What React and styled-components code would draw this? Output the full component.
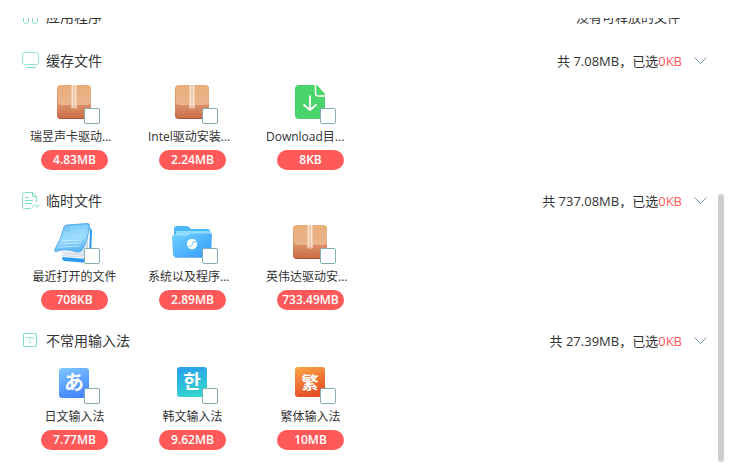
import styled, { createGlobalStyle } from "styled-components";

const GlobalStyle = createGlobalStyle`
  * {
    box-sizing: border-box;
  }

  body {
    margin: 0;
    background-color: white;
    color: #333;
    font-family: "Open Sans", "Noto Sans CJK SC", sans-serif;
  }
`;

const Page = styled.div`
  display: flex;
  height: 100vh;
  padding-top: 18px;
  overflow: hidden;
`;

const List = styled.main`
  flex: 1;
  min-width: 0;
  overflow: hidden;
`;

const Rail = styled.div`
  width: 22px;
  padding: 176px 0 2px;
  display: flex;
`;

const Thumb = styled.div`
  width: 6px;
  border-radius: 3px;
  background-color: #cdcdcd;
`;

const Section = styled.section`
  padding-bottom: ${(props) => (props.$empty ? "0" : "9px")};
  margin-top: ${(props) => (props.$empty ? "-23px" : "0")};
`;

const Header = styled.header`
  height: 44px;
  padding: 0 11px 0 22px;
  display: flex;
  align-items: center;
`;

const Title = styled.h2`
  flex: 1;
  margin: 0 0 0 6px;
  font-size: 14px;
  font-weight: 400;
  line-height: 20px;
`;

const Summary = styled.span`
  font-size: 13px;
  line-height: 20px;
  margin-right: ${(props) => (props.$empty ? "27px" : "12px")};
`;

const Selected = styled.span`
  color: #ff5c5c;
`;

const Toggle = styled.button`
  display: flex;
  padding: 0;
  border: none;
  background: none;
  cursor: pointer;
`;

const Items = styled.div`
  display: flex;
  flex-wrap: wrap;
  gap: 29px;
  padding-left: 30px;
`;

const Item = styled.label`
  width: 89px;
  display: flex;
  flex-direction: column;
  align-items: center;
`;

const Picture = styled.span`
  position: relative;
  width: 41px;
  height: 42px;
`;

const Check = styled.input`
  appearance: none;
  position: absolute;
  right: -5px;
  bottom: 1px;
  width: 16px;
  height: 16px;
  margin: 0;
  border: 1px solid #86adb3;
  border-radius: 2px;
  background-color: white;

  &:checked {
    background-color: #ff5c5c;
  }
`;

const Name = styled.span`
  width: 100%;
  margin-bottom: 2px;
  font-size: 12px;
  line-height: 23px;
  white-space: nowrap;
  text-align: ${(props) => (props.$cut ? "left" : "center")};
`;

const Size = styled.span`
  min-width: 67px;
  height: 20px;
  padding: 0 5px;
  border-radius: 10px;
  background-color: #ff5959;
  color: white;
  font-size: 12px;
  font-weight: 600;
  line-height: 20px;
  text-align: center;
`;

const Art = ({ children }) => (
  <svg width="41" height="42" viewBox="0 0 41 42" aria-hidden="true">
    {children}
  </svg>
);

const BoxArt = ({ id }) => (
  <Art>
    <defs>
      <linearGradient id={id + "body"} x1="0" y1="0" x2="0" y2="1">
        <stop offset="0" stopColor="#e9a876" />
        <stop offset="0.6" stopColor="#dc9068" />
        <stop offset="1" stopColor="#c96e49" />
      </linearGradient>
      <linearGradient id={id + "top"} x1="0" y1="0" x2="0" y2="1">
        <stop offset="0" stopColor="#e8ad78" />
        <stop offset="1" stopColor="#e9b48f" />
      </linearGradient>
    </defs>
    <rect x="3" y="3" width="34" height="33" rx="4" fill="#a95632" />
    <rect x="3" y="2" width="34" height="33" rx="4" fill={"url(#" + id + "body)"} />
    <path d="M4 6q0-4 4-4h24q5 0 5 4v12q0 4-4 4H8q-4 0-4-4z" fill={"url(#" + id + "top)"} />
    <path d="M17 2h6v24l-1-1-1 1-1-1-1 1-1-1-1 1z" fill="#f3d2b8" opacity=".75" />
    <path d="M18.500 2v22M21.500 2v22" stroke="#fff0e2" strokeWidth="1" opacity=".65" />
  </Art>
);

const DownloadArt = () => (
  <Art>
    <path d="M9 2h18l8 9v21q0 4-4 4H9q-4 0-4-4V6q0-4 4-4z" fill="#49d56b" />
    <path d="M25.500 1v9q0 3 3 3H36" fill="none" stroke="white" strokeWidth="1.500" />
    <path d="M20 12.500v14M13.500 21.500l6.500 5.500 6.500-5.500" fill="none" stroke="white" strokeWidth="1.800" />
  </Art>
);

const NotebookArt = () => (
  <Art>
    <defs>
      <linearGradient id="cover" x1="0" y1="0" x2=".2" y2="1">
        <stop offset="0" stopColor="#58b9f8" />
        <stop offset=".6" stopColor="#9bdcfe" />
        <stop offset="1" stopColor="#5cb8f5" />
      </linearGradient>
    </defs>
    <path d="M8 32L33 4l3 1q2 1 2 3l-1 28q0 4-3 4L10 38q-2-1-2-4z" fill="#2d9cf0" />
    <path d="M6 29L34 4l2 3-1 26q0 3-3 3L8 34q-2-1-2-3z" fill="#f4f8fb" />
    <path d="M8 32.500l24 2M9 30.500l23 2M33.500 10v23" fill="none" stroke="#b5c6d2" strokeWidth=".7" />
    <path d="M8 29h18l7-18v18l-3 3z" fill="#dbe5eb" />
    <path d="M10 4q1-2 3-2L33 .5q3 0 2.500 2.500-2.500 17-7.500 24-2 2.500-5 2Q11 25 2 28.500 0 29 1 26 7 16 10 4z" fill="url(#cover)" stroke="#419fe8" strokeWidth=".8" />
    <path d="M11 5q1-2 3-2L34 2q-1 9-6 12-8-1-19 2z" fill="#b2e3ff" opacity=".3" />
    <path d="M8 18l20-1M7 21l20-1M5 24l20-1" fill="none" stroke="#e4f5ff" strokeWidth=".9" opacity=".7" />
    <circle cx="13.500" cy="6.500" r="1.500" fill="#a9defd" stroke="#3c9be4" strokeWidth=".6" />
  </Art>
);

const FolderArt = () => (
  <Art>
    <defs>
      <linearGradient id="folder" x1="0" y1="0" x2="1" y2="1">
        <stop offset="0" stopColor="#73cffe" />
        <stop offset="1" stopColor="#2f9dfb" />
      </linearGradient>
    </defs>
    <path d="M2 6q0-3 3-3h10q2 0 3 2l1 1h17q2 0 2 3v12H2z" fill="#4db8f8" />
    <path d="M4 8h33v4H4z" fill="#8bdcff" />
    <path d="M0 14q0-2 2-2h12q2 0 3-1l1-1h20q2 0 2 2l-1 19q0 3-3 3H4q-3 0-3-3z" fill="url(#folder)" />
    <path d="M1 13q0-1 2-1h12l4-2h20" fill="none" stroke="#a6e5ff" strokeWidth=".8" />
    <path d="M3 34.500h33" stroke="#2685dc" opacity=".6" />
    <circle cx="20" cy="21" r="5.200" fill="white" />
    <path d="M25.500 19.500q-2.500-2-4.500-.5-1.500 1.500-1 2.500-1.500 2.500-5.500 1 2.500 2 5 .5 1.500-1 1-2.500 1.500-2 5-1z" fill="#4bb0fb" />
  </Art>
);

const InputArt = ({ id, x, y, from, to, font, glyph, size }) => (
  <Art>
    <defs>
      <linearGradient id={id} x1=".2" y1="0" x2=".5" y2="1">
        <stop offset="0" stopColor={from} />
        <stop offset="1" stopColor={to} />
      </linearGradient>
    </defs>
    <rect x={x} y={y} width="30" height="30" rx="3" fill={"url(#" + id + ")"} />
    <text
      x={x + 15}
      y={y + 22}
      fill="white"
      fontFamily={`"${font}", sans-serif`}
      fontSize={size}
      fontWeight="700"
      textAnchor="middle"
    >
      {glyph}
    </text>
  </Art>
);

const HeaderIcon = ({ children }) => (
  <svg width="18" height="18" viewBox="0 0 18 18" fill="none" stroke="#80dfc9" aria-hidden="true">
    {children}
  </svg>
);

const sections = [
  {
    title: "应用程序",
    icon: (
      <>
        <rect x="1.500" y="1.500" width="5" height="5" rx="1" />
        <rect x="10.500" y="1.500" width="5" height="5" rx="1" />
        <path d="M1.500 9.500h5v4q0 2-2 2h-1q-2 0-2-2zM10.500 9.500h5v4q0 2-2 2h-1q-2 0-2-2z" />
      </>
    ),
    items: [],
  },
  {
    title: "缓存文件",
    total: "7.08MB",
    icon: (
      <>
        <rect x=".5" y=".5" width="16" height="12" rx="2" stroke="#93e4d1" />
        <path d="M4 15.500h10" />
      </>
    ),
    items: [
      { name: "瑞昱声卡驱动...", size: "4.83MB", art: <BoxArt id="realtek" /> },
      { name: "Intel驱动安装...", size: "2.24MB", art: <BoxArt id="intel" /> },
      { name: "Download目...", size: "8KB", art: <DownloadArt /> },
    ],
  },
  {
    title: "临时文件",
    total: "737.08MB",
    icon: (
      <>
        <path d="M9 16.500H2.500q-2 0-2-2v-12q0-2 2-2h8l4 4v6M10.500.5v4h4" />
        <path d="M3 5.500h4M3 8.500h8M3 11.500h7M10.500 15.500q2-5 3.500-1.500t3-2" />
      </>
    ),
    items: [
      { name: "最近打开的文件", size: "708KB", art: <NotebookArt /> },
      { name: "系统以及程序...", size: "2.89MB", art: <FolderArt /> },
      { name: "英伟达驱动安...", size: "733.49MB", art: <BoxArt id="nvidia" /> },
    ],
  },
  {
    title: "不常用输入法",
    total: "27.39MB",
    icon: (
      <>
        <rect x="1.500" y="1.500" width="13" height="13" rx="1.500" />
        <path d="M4.500 7V5.500h7V7M8 5.500v6" stroke="#a0e8d7" />
      </>
    ),
    items: [
      {
        name: "日文输入法",
        size: "7.77MB",
        art: <InputArt id="jp" x={5} y={5} from="#79c3ff" to="#4486ff" font="Noto Sans CJK JP" glyph="あ" size={20} />,
      },
      {
        name: "韩文输入法",
        size: "9.62MB",
        art: <InputArt id="kr" x={5} y={4} from="#289fee" to="#35d5ce" font="Noto Sans CJK KR" glyph="한" size={19} />,
      },
      {
        name: "繁体输入法",
        size: "10MB",
        art: <InputArt id="tc" x={5} y={4} from="#f9a243" to="#e54b25" font="Noto Sans CJK TC" glyph="繁" size={17} />,
      },
    ],
  },
];

const App = () => {
  return (
    <Page>
      <GlobalStyle />
      <List>
        {sections.map((section) => (
          <Section key={section.title} $empty={!section.total}>
            <Header>
              <HeaderIcon>{section.icon}</HeaderIcon>
              <Title>{section.title}</Title>
              {section.total ? (
                <>
                  <Summary>
                    共 {section.total}，已选<Selected>0KB</Selected>
                  </Summary>
                  <Toggle type="button" aria-label={section.title}>
                    <svg width="13" height="8" viewBox="0 0 13 8" fill="none" stroke="#6fa0ac">
                      <path d="M.5.5l6 6 6-6" />
                    </svg>
                  </Toggle>
                </>
              ) : (
                <Summary $empty>没有可释放的文件</Summary>
              )}
            </Header>
            {section.items.length > 0 && (
              <Items>
                {section.items.map((item) => (
                  <Item key={item.name}>
                    <Picture>
                      {item.art}
                      <Check type="checkbox" />
                    </Picture>
                    <Name $cut={item.name.endsWith("...")}>{item.name}</Name>
                    <Size>{item.size}</Size>
                  </Item>
                ))}
              </Items>
            )}
          </Section>
        ))}
      </List>
      <Rail>
        <Thumb />
      </Rail>
    </Page>
  );
};

export default App;
